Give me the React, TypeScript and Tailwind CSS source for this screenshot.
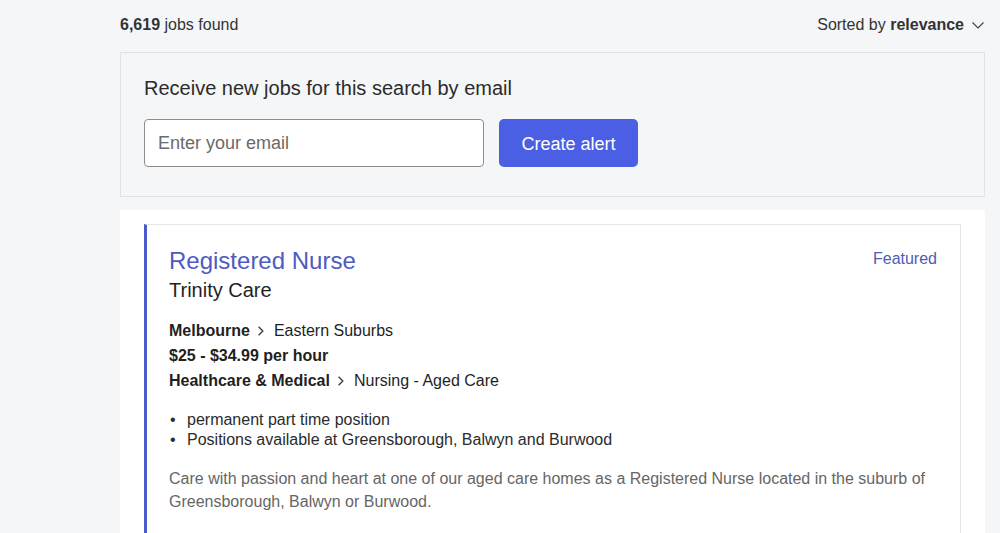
import React from "react";

const Chevron = ({ className = "" }: { className?: string }) => (
  <svg className={className} viewBox="0 0 10 10" fill="none" stroke="currentColor" strokeWidth="1.2">
    <path d="M3 1.5 L6.5 5 L3 8.5" />
  </svg>
);

export default function App() {
  return (
    <div
      className="min-h-[533px] bg-[#f5f6f8] pl-[120px] pr-[15px] text-[#2b2b2b]"
      style={{ fontFamily: '"Liberation Sans", Arial, sans-serif' }}
    >
      <div className="flex h-[52px] items-start justify-between pt-[16px]">
        <div className="text-[16px] leading-[18px] text-[#333]">
          <span className="font-bold">6,619</span> jobs found
        </div>
        <div className="flex items-center text-[16px] leading-[18px] text-[#333]">
          <span>
            Sorted by <span className="font-bold">relevance</span>
          </span>
          <svg className="ml-[7px] h-[14px] w-[14px]" viewBox="0 0 14 14" fill="none" stroke="#444" strokeWidth="1.2">
            <path d="M1.5 4.5 L7 10 L12.5 4.5" />
          </svg>
        </div>
      </div>

      <div className="h-[145px] border border-[#e0e2e6] bg-[#f5f6f8] pl-[23px] pt-[23px]">
        <div className="text-[20px] leading-[24px] text-[#2b2b2b]">
          Receive new jobs for this search by email
        </div>
        <div className="mt-[19px] flex gap-[15px]">
          <input
            className="h-[48px] w-[340px] rounded-[4px] border border-[#8c8c8c] bg-white px-[13px] pt-[1px] text-[18px] text-[#333] outline-none placeholder:text-[#6a6a6a]"
            placeholder="Enter your email"
            style={{ fontFamily: '"Liberation Sans", Arial, sans-serif' }}
          />
          <button className="h-[48px] w-[139px] rounded-[5px] bg-[#4a5fe3] pt-[2px] text-[18px] text-white">
            Create alert
          </button>
        </div>
      </div>

      <div className="mt-[13px] bg-white px-[24px] pt-[14px]">
        <div className="border border-l-[3px] border-[#e6e6e6] border-l-[#4a5ac8] pb-[30px] pl-[22px] pr-[23px] pt-[22px]">
          <div className="flex items-start justify-between">
            <div className="text-[24px] leading-[28px] text-[#4d5bc2]">Registered Nurse</div>
            <div className="mt-[2px] text-[16px] leading-[20px] text-[#4f5cb3]">Featured</div>
          </div>
          <div className="mt-[3px] text-[20px] leading-[24px] text-[#1f1f1f]">Trinity Care</div>

          <div className="mt-[16px] text-[16px] leading-[25px] text-[#1f1f1f]">
            <div className="flex items-center">
              <span className="font-bold">Melbourne</span>
              <Chevron className="ml-[5px] mr-[7px] h-[12px] w-[12px] text-[#444]" />
              <span>Eastern Suburbs</span>
            </div>
            <div className="font-bold">$25 - $34.99 per hour</div>
            <div className="flex items-center">
              <span className="font-bold">Healthcare &amp; Medical</span>
              <Chevron className="ml-[5px] mr-[7px] h-[12px] w-[12px] text-[#444]" />
              <span>Nursing - Aged Care</span>
            </div>
          </div>

          <div className="mt-[17px] text-[16px] leading-[20px] text-[#2b2b2b]">
            <div className="flex">
              <span className="w-[18px] pl-[1px]">•</span>
              <span>permanent part time position</span>
            </div>
            <div className="flex">
              <span className="w-[18px] pl-[1px]">•</span>
              <span>Positions available at Greensborough, Balwyn and Burwood</span>
            </div>
          </div>

          <div className="mt-[17px] pr-[10px] text-[16px] leading-[23px] text-[#666]">
            Care with passion and heart at one of our aged care homes as a Registered Nurse located in the suburb of
            Greensborough, Balwyn or Burwood.
          </div>
        </div>
      </div>
    </div>
  );
}
